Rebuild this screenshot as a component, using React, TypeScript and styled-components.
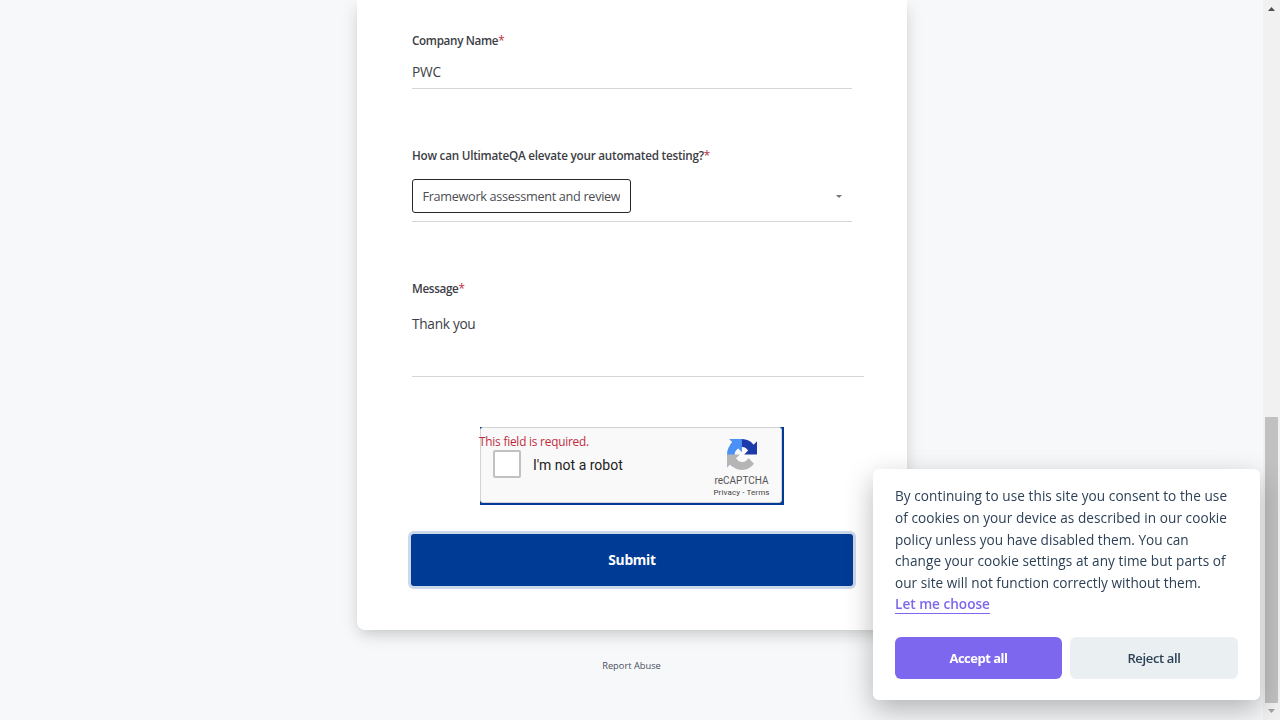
import React from "react";
import styled, { createGlobalStyle } from "styled-components";

const Global = createGlobalStyle`
  *, *::before, *::after { box-sizing: border-box; }
  html, body { margin: 0; padding: 0; height: 100%; overflow: hidden; background: #f7f8fa; }
  body { font-family: "Open Sans", "Noto Sans", sans-serif; color: #33343c; }
  button { font-family: inherit; border: 0; margin: 0; padding: 0; }
`;

const Viewport = styled.div`
  display: flex;
  width: 1280px;
  height: 720px;
  overflow: hidden;
  background: #f7f8fa;
`;

const Page = styled.main`
  flex: 1;
  display: flex;
  flex-direction: column;
  align-items: center;
`;

const Card = styled.form`
  width: 550px;
  height: 630px;
  margin-left: 1px;
  padding: 31px 54px 0 55px;
  background: #fff;
  border-radius: 0 0 8px 8px;
  box-shadow: 0 5px 18px rgba(33, 36, 34, 0.1), 0 6px 14px -4px rgba(33, 36, 34, 0.16);
  display: flex;
  flex-direction: column;
`;

const Field = styled.div<{ $height: number }>`
  height: ${(p) => p.$height}px;
  flex: none;
`;

const Label = styled.label<{ $track?: number }>`
  display: block;
  height: 20px;
  font-size: 11.7px;
  line-height: 18px;
  font-weight: 600;
  letter-spacing: ${(p) => p.$track ?? -0.23}px;
  white-space: nowrap;
  color: #3c3d45;
`;

const Required = styled.span`
  color: #c02b3c;
  font-weight: 400;
`;

const Value = styled.div<{ $height: number; $pad: number; $width?: number; $track?: number }>`
  width: ${(p) => p.$width ?? 440}px;
  height: ${(p) => p.$height}px;
  padding-top: ${(p) => p.$pad}px;
  border-bottom: 1px solid #d5d6d8;
  font-size: 13.7px;
  line-height: 20px;
  letter-spacing: ${(p) => p.$track ?? 0}px;
  color: #3d3e45;
`;

const SelectRow = styled.div`
  display: flex;
  align-items: center;
  justify-content: space-between;
  width: 440px;
  height: 51px;
  margin-top: 5px;
  padding: 0 9px 0 0;
  border-bottom: 1px solid #d5d6d8;
`;

const Chip = styled.div`
  width: 219px;
  height: 34px;
  padding: 0 10px 0 9.5px;
  border: 1px solid #26272c;
  border-radius: 3px;
`;

const ChipText = styled.div`
  overflow: hidden;
  font-size: 12.7px;
  line-height: 33px;
  letter-spacing: -0.32px;
  white-space: nowrap;
  color: #4c4d53;
`;

const Captcha = styled.div`
  align-self: center;
  width: 304px;
  height: 78px;
  flex: none;
  margin-right: 2px;
  padding-right: 2px;
  padding-bottom: 2px;
  background: #003b95;
`;

const CaptchaBox = styled.div`
  position: relative;
  display: flex;
  align-items: center;
  height: 76px;
  padding-left: 12px;
  border: 1px solid #d3d3d3;
  border-radius: 3px;
  background: #f9f9f9;
  font-family: Roboto, sans-serif;
`;

const CaptchaError = styled.div`
  position: absolute;
  left: -1.5px;
  top: 3px;
  font: 400 11.8px/20px "Open Sans", sans-serif;
  letter-spacing: -0.2px;
  white-space: nowrap;
  color: #c02b3c;
`;

const CheckSquare = styled.div`
  width: 28px;
  height: 28px;
  margin-bottom: 2px;
  border: 2px solid #c1c1c1;
  border-radius: 2px;
  background: #fff;
`;

const RobotText = styled.div`
  flex: 1;
  padding-left: 12.5px;
  font-size: 14px;
  line-height: 17px;
  color: #222;
`;

const Brand = styled.div`
  display: flex;
  flex-direction: column;
  align-items: center;
  width: 70px;
  height: 100%;
  margin-right: 4px;
  padding-top: 11px;
  color: #555;
`;

const BrandName = styled.div`
  margin-top: 5px;
  font-size: 10px;
  line-height: 12px;
`;

const BrandLinks = styled.div`
  margin-top: 1px;
  font-size: 8px;
  line-height: 10px;
  letter-spacing: 0.12px;
  white-space: nowrap;
  color: #444;
`;

const Submit = styled.button`
  width: 442px;
  height: 52px;
  flex: none;
  margin: 29px 0 0 -1px;
  border-radius: 3px;
  background: #003b95;
  box-shadow: 0 0 0 3px #ccd8ea;
  color: #fff;
  font-size: 13.8px;
  line-height: 52px;
  font-weight: 700;
  letter-spacing: -0.3px;
`;

const Report = styled.a`
  margin-top: 29px;
  font-size: 9.3px;
  line-height: 14px;
  color: #4a4f5c;
`;

const Scrollbar = styled.div`
  display: flex;
  flex-direction: column;
  align-items: center;
  width: 17px;
  height: 720px;
  background: #f1f1f1;
`;

const Arrow = styled.svg`
  display: block;
  width: 17px;
  height: 17px;
  flex: none;
`;

const Thumb = styled.div`
  width: 13px;
  height: 286px;
  margin-top: 400px;
  background: #c1c1c1;
`;

const Consent = styled.aside`
  position: fixed;
  left: 873px;
  top: 469px;
  width: 387px;
  height: 231px;
  padding: 16.4px 22px 0;
  border-radius: 6px;
  background: #fff;
  box-shadow: 0 10px 28px rgba(2, 2, 3, 0.28);
  color: #2d4156;
`;

const ConsentText = styled.p`
  margin: 0;
  font-size: 13.6px;
  line-height: 21.65px;
`;

const Line = styled.span<{ $track?: number }>`
  display: block;
  white-space: nowrap;
  letter-spacing: ${(p) => p.$track ?? 0.06}px;
`;

const Choose = styled.a`
  display: inline-block;
  height: 19px;
  margin-top: 1.4px;
  border-bottom: 1px solid #7b68ee;
  font-size: 13.6px;
  line-height: 17px;
  font-weight: 600;
  color: #7c67ee;
  vertical-align: top;
`;

const Actions = styled.div`
  display: flex;
  gap: 8px;
  margin-top: 21.7px;
`;

const Action = styled.button<{ $primary?: boolean }>`
  width: ${(p) => (p.$primary ? 167 : 168)}px;
  height: 42px;
  border-radius: 6px;
  background: ${(p) => (p.$primary ? "#7c67ee" : "#eaeff2")};
  color: ${(p) => (p.$primary ? "#fff" : "#2d4156")};
  font-size: 13px;
  line-height: 42px;
  font-weight: ${(p) => (p.$primary ? 700 : 600)};
  letter-spacing: ${(p) => (p.$primary ? -0.5 : -0.35)}px;
`;

function RecaptchaLogo() {
  return (
    <svg width="30" height="31" viewBox="0 0 64 64" preserveAspectRatio="none">
      <path fill="#1c3aa9" d="M64 31.955l-.033-1.37V4.687l-7.16 7.16C50.948 4.674 42.033.093 32.05.093c-10.4 0-19.622 4.96-25.458 12.64l11.736 11.86a15.55 15.55 0 0 1 4.754-5.334c2.05-1.6 4.952-2.906 8.968-2.906.485 0 .86.057 1.135.163 4.976.393 9.288 3.14 11.828 7.124l-8.307 8.307L64 31.953" />
      <path fill="#4b90f7" d="M31.862.094l-1.37.033H4.594l7.16 7.16C4.58 13.147 0 22.06 0 32.046c0 10.4 4.96 19.622 12.64 25.458L24.5 45.768a15.55 15.55 0 0 1-5.334-4.754c-1.6-2.05-2.906-4.952-2.906-8.968 0-.485.057-.86.163-1.135.393-4.976 3.14-9.288 7.124-11.828l8.307 8.307L31.86.095" />
      <path fill="#b5b5b5" d="M.001 32.045l.033 1.37v25.898l7.16-7.16c5.86 7.173 14.774 11.754 24.76 11.754 10.4 0 19.622-4.96 25.458-12.64l-11.736-11.86a15.55 15.55 0 0 1-4.754 5.334c-2.05 1.6-4.952 2.906-8.968 2.906-.485 0-.86-.057-1.135-.163-4.976-.393-9.288-3.14-11.828-7.124l8.307-8.307c-10.522.04-22.4.066-27.295-.005" />
    </svg>
  );
}

export default function App() {
  return (
    <>
      <Global />
      <Viewport>
        <Page>
          <Card>
            <Field $height={115}>
              <Label $track={-0.34}>Company Name<Required>*</Required></Label>
              <Value $height={38} $pad={11} $track={-0.15}>PWC</Value>
            </Field>
            <Field $height={133}>
              <Label>How can UltimateQA elevate your automated testing?<Required>*</Required></Label>
              <SelectRow>
                <Chip><ChipText>Framework assessment and review</ChipText></Chip>
                <svg width="8" height="5" viewBox="0 0 8 5"><path d="M1 1h6L4 4z" fill="#70747f" /></svg>
              </SelectRow>
            </Field>
            <Field $height={148}>
              <Label $track={-0.34}>Message<Required>*</Required></Label>
              <Value $height={78} $pad={15} $width={452} $track={-0.3}>Thank you</Value>
            </Field>
            <Captcha>
              <CaptchaBox>
                <CaptchaError>This field is required.</CaptchaError>
                <CheckSquare />
                <RobotText>I'm not a robot</RobotText>
                <Brand>
                  <RecaptchaLogo />
                  <BrandName>reCAPTCHA</BrandName>
                  <BrandLinks>Privacy - Terms</BrandLinks>
                </Brand>
              </CaptchaBox>
            </Captcha>
            <Submit type="button">Submit</Submit>
          </Card>
          <Report>Report Abuse</Report>
        </Page>
        <Scrollbar>
          <Arrow viewBox="0 0 17 17"><path d="M5 11h7L8.5 7z" fill="#505050" /></Arrow>
          <Thumb />
          <Arrow viewBox="0 0 17 17"><path d="M5 6h7L8.5 10z" fill="#a3a3a3" /></Arrow>
        </Scrollbar>
      </Viewport>
      <Consent>
        <ConsentText>
          <Line>By continuing to use this site you consent to the use</Line>
          <Line>of cookies on your device as described in our cookie</Line>
          <Line $track={0.02}>policy unless you have disabled them. You can</Line>
          <Line>change your cookie settings at any time but parts of</Line>
          <Line $track={0.03}>our site will not function correctly without them.</Line>
          <Choose>Let me choose</Choose>
        </ConsentText>
        <Actions>
          <Action $primary>Accept all</Action>
          <Action>Reject all</Action>
        </Actions>
      </Consent>
    </>
  );
}
